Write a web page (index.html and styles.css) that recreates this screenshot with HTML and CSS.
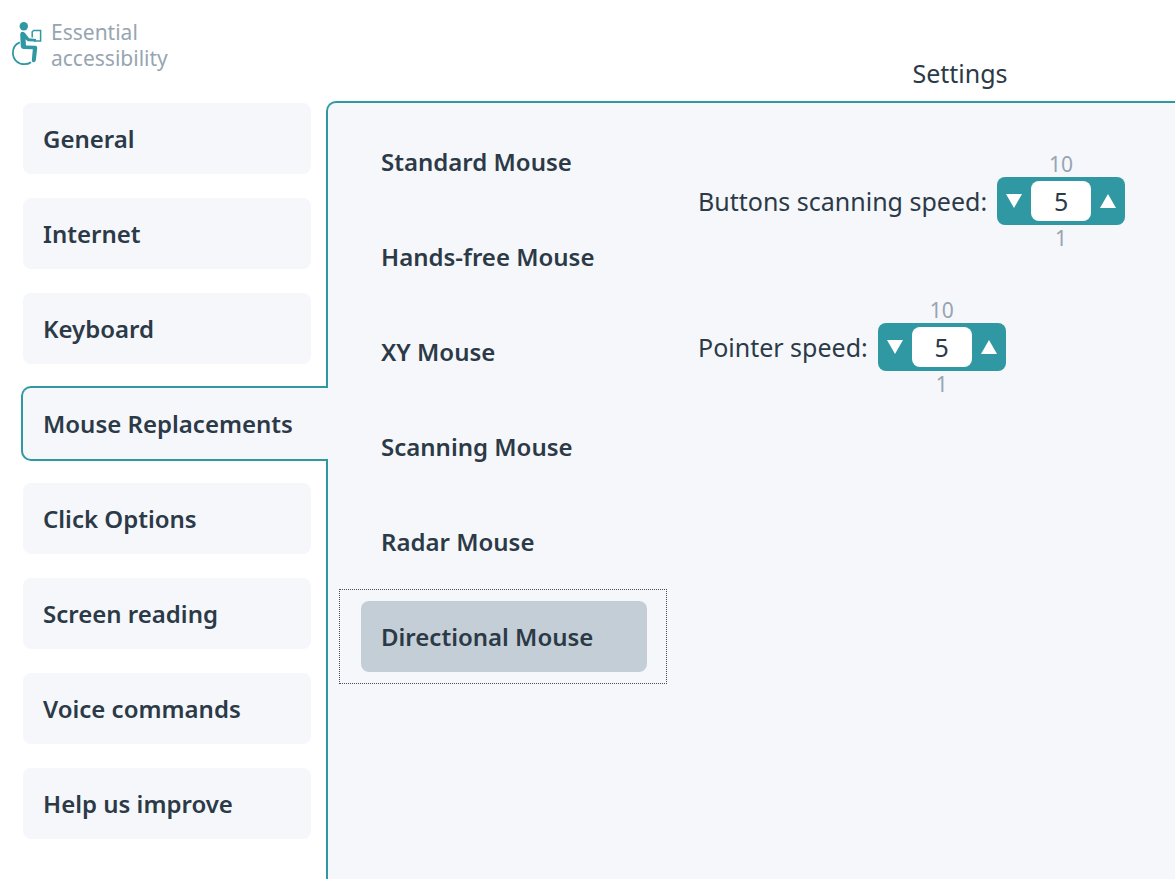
FILE: index.html
```html
<!DOCTYPE html>
<html lang="en">
<head>
    <meta charset="UTF-8">
    <meta name="viewport" content="width=device-width, initial-scale=1.0">
    <title>Essential accessibility - Settings</title>
    <link rel="stylesheet" href="styles.css">
</head>
<body>
    <header class="header">
        <div class="brand">
            <svg class="logo" width="30" height="44" viewBox="0 0 30 44" aria-hidden="true">
                <circle cx="11.8" cy="4.3" r="4.2" fill="#3098a2"/>
                <path d="M8.2 12.2Q8.5 9.8 10.6 9.8Q12.3 9.8 13.4 11.6L17 16.3L24 17Q24.8 18.8 23 19.4L15.8 19.2L13.6 17.2L14 23.4L23.6 23.8Q25.6 24.2 25.2 26.4L23.8 38.6Q23.2 40.4 21.2 40.2Q19.6 39.8 19.8 38.2L20.8 27.2L11.4 27Q9 26.8 8.8 24.6Z" fill="#3098a2"/>
                <path d="M20.2 15.5V9.8L21.7 8.4H28.6V19.1H22" fill="none" stroke="#3098a2" stroke-width="1.5"/>
                <path d="M7.8 20.3C3.4 22 .9 26 .9 31C.9 37.5 6 42.2 12.4 42.2C15 42.2 17.1 41.6 19 40.2" fill="none" stroke="#3098a2" stroke-width="1.8"/>
            </svg>
            <div class="brand-name">Essential<br>accessibility</div>
        </div>
        <h1 class="page-title">Settings</h1>
    </header>

    <div class="layout">
        <nav class="tabs">
            <a class="tab" href="#">General</a>
            <a class="tab" href="#">Internet</a>
            <a class="tab" href="#">Keyboard</a>
            <a class="tab tab-active" href="#" aria-current="page">Mouse Replacements</a>
            <a class="tab" href="#">Click Options</a>
            <a class="tab" href="#">Screen reading</a>
            <a class="tab" href="#">Voice commands</a>
            <a class="tab" href="#">Help us improve</a>
        </nav>

        <main class="panel">
            <div class="options">
                <div class="option"><button type="button">Standard Mouse</button></div>
                <div class="option"><button type="button">Hands-free Mouse</button></div>
                <div class="option"><button type="button">XY Mouse</button></div>
                <div class="option"><button type="button">Scanning Mouse</button></div>
                <div class="option"><button type="button">Radar Mouse</button></div>
                <div class="option option-selected"><button type="button">Directional Mouse</button></div>
            </div>

            <form class="settings">
                <div class="setting">
                    <label for="scanSpeed">Buttons scanning speed:</label>
                    <div class="stepper-group">
                        <span class="limit">10</span>
                        <div class="stepper">
                            <button type="button" aria-label="Decrease scanning speed" onclick="step('scanSpeed', -1)">
                                <svg width="16" height="14" viewBox="0 0 16 14"><path d="M0 0H16L8 14Z" fill="#fff"/></svg>
                            </button>
                            <input type="text" id="scanSpeed" value="5">
                            <button type="button" aria-label="Increase scanning speed" onclick="step('scanSpeed', 1)">
                                <svg width="16" height="14" viewBox="0 0 16 14"><path d="M0 14H16L8 0Z" fill="#fff"/></svg>
                            </button>
                        </div>
                        <span class="limit">1</span>
                    </div>
                </div>
                <div class="setting">
                    <label for="pointerSpeed">Pointer speed:</label>
                    <div class="stepper-group">
                        <span class="limit">10</span>
                        <div class="stepper">
                            <button type="button" aria-label="Decrease pointer speed" onclick="step('pointerSpeed', -1)">
                                <svg width="16" height="14" viewBox="0 0 16 14"><path d="M0 0H16L8 14Z" fill="#fff"/></svg>
                            </button>
                            <input type="text" id="pointerSpeed" value="5">
                            <button type="button" aria-label="Increase pointer speed" onclick="step('pointerSpeed', 1)">
                                <svg width="16" height="14" viewBox="0 0 16 14"><path d="M0 14H16L8 0Z" fill="#fff"/></svg>
                            </button>
                        </div>
                        <span class="limit">1</span>
                    </div>
                </div>
            </form>
        </main>
    </div>

    <script>
        function step(id, amount) {
            const input = document.getElementById(id);
            const value = Number(input.value) + amount;
            input.value = Math.min(10, Math.max(1, value));
        }
    </script>
</body>
</html>
```
FILE: styles.css
```css
* {
    box-sizing: border-box;
}
body {
    margin: 0;
    min-height: 100vh;
    display: flex;
    flex-direction: column;
    background-color: #fff;
    color: #2c3a47;
    font-family: "Noto Sans", "Open Sans", sans-serif;
    font-size: 25px;
    line-height: 32px;
}
button, input {
    font: inherit;
    color: inherit;
    border: none;
    padding: 0;
}
.header {
    display: flex;
    height: 101px;
}
.brand {
    display: flex;
    align-items: flex-start;
    gap: 9px;
    width: 745px;
    padding: 19px 0 0 12px;
}
.logo {
    margin-top: 3px;
}
.brand-name {
    font-size: 21px;
    line-height: 26px;
    color: #97a5b1;
}
.page-title {
    flex: 1;
    margin: 0;
    padding-top: 57px;
    font-size: 25px;
    font-weight: 400;
    text-align: center;
}
.layout {
    flex: 1;
    display: flex;
}
.tabs {
    display: flex;
    flex-direction: column;
    gap: 24px;
    width: 326px;
    padding: 2px 15px 24px 23px;
}
.tab {
    display: flex;
    align-items: center;
    height: 71px;
    padding: 0 20px;
    border-radius: 8px;
    background-color: #f5f7fb;
    color: inherit;
    font-size: 24px;
    font-weight: 600;
    text-decoration: none;
    white-space: nowrap;
}
.tab-active {
    position: relative;
    z-index: 1;
    height: 75px;
    margin: -2px -17px -2px -2px;
    border: 2px solid #3098a2;
    border-right: none;
    border-radius: 10px 0 0 10px;
}
.panel {
    flex: 1;
    display: flex;
    gap: 31px;
    padding: 11px 0 0 11px;
    border: solid #3098a2;
    border-width: 2px 0 0 2px;
    border-top-left-radius: 10px;
    background-color: #f5f7fb;
}
.options {
    width: 328px;
}
.option {
    height: 95px;
    padding: 11px 19px 11px 21px;
    border: 1px solid transparent;
}
.option button {
    width: 100%;
    height: 71px;
    padding: 0 20px;
    border-radius: 8px;
    background: none;
    font-size: 24px;
    font-weight: 600;
    text-align: left;
}
.option-selected {
    border: 1px dotted #4a4a55;
}
.option-selected button {
    background-color: #c4ced6;
}
.settings {
    display: flex;
    flex-direction: column;
    gap: 46px;
    padding-top: 37px;
}
.setting {
    display: flex;
    align-items: center;
    gap: 10px;
    white-space: nowrap;
}
.stepper-group {
    display: flex;
    flex-direction: column;
    align-items: center;
}
.limit {
    font-size: 21px;
    line-height: 26px;
    color: #97a5b1;
}
.stepper {
    display: flex;
    align-items: center;
    height: 48px;
    border-radius: 8px;
    background-color: #3098a2;
}
.stepper button {
    display: flex;
    align-items: center;
    justify-content: center;
    width: 34px;
    height: 48px;
    background: none;
}
.stepper input {
    width: 60px;
    height: 40px;
    border-radius: 8px;
    background-color: #fff;
    text-align: center;
}
```
